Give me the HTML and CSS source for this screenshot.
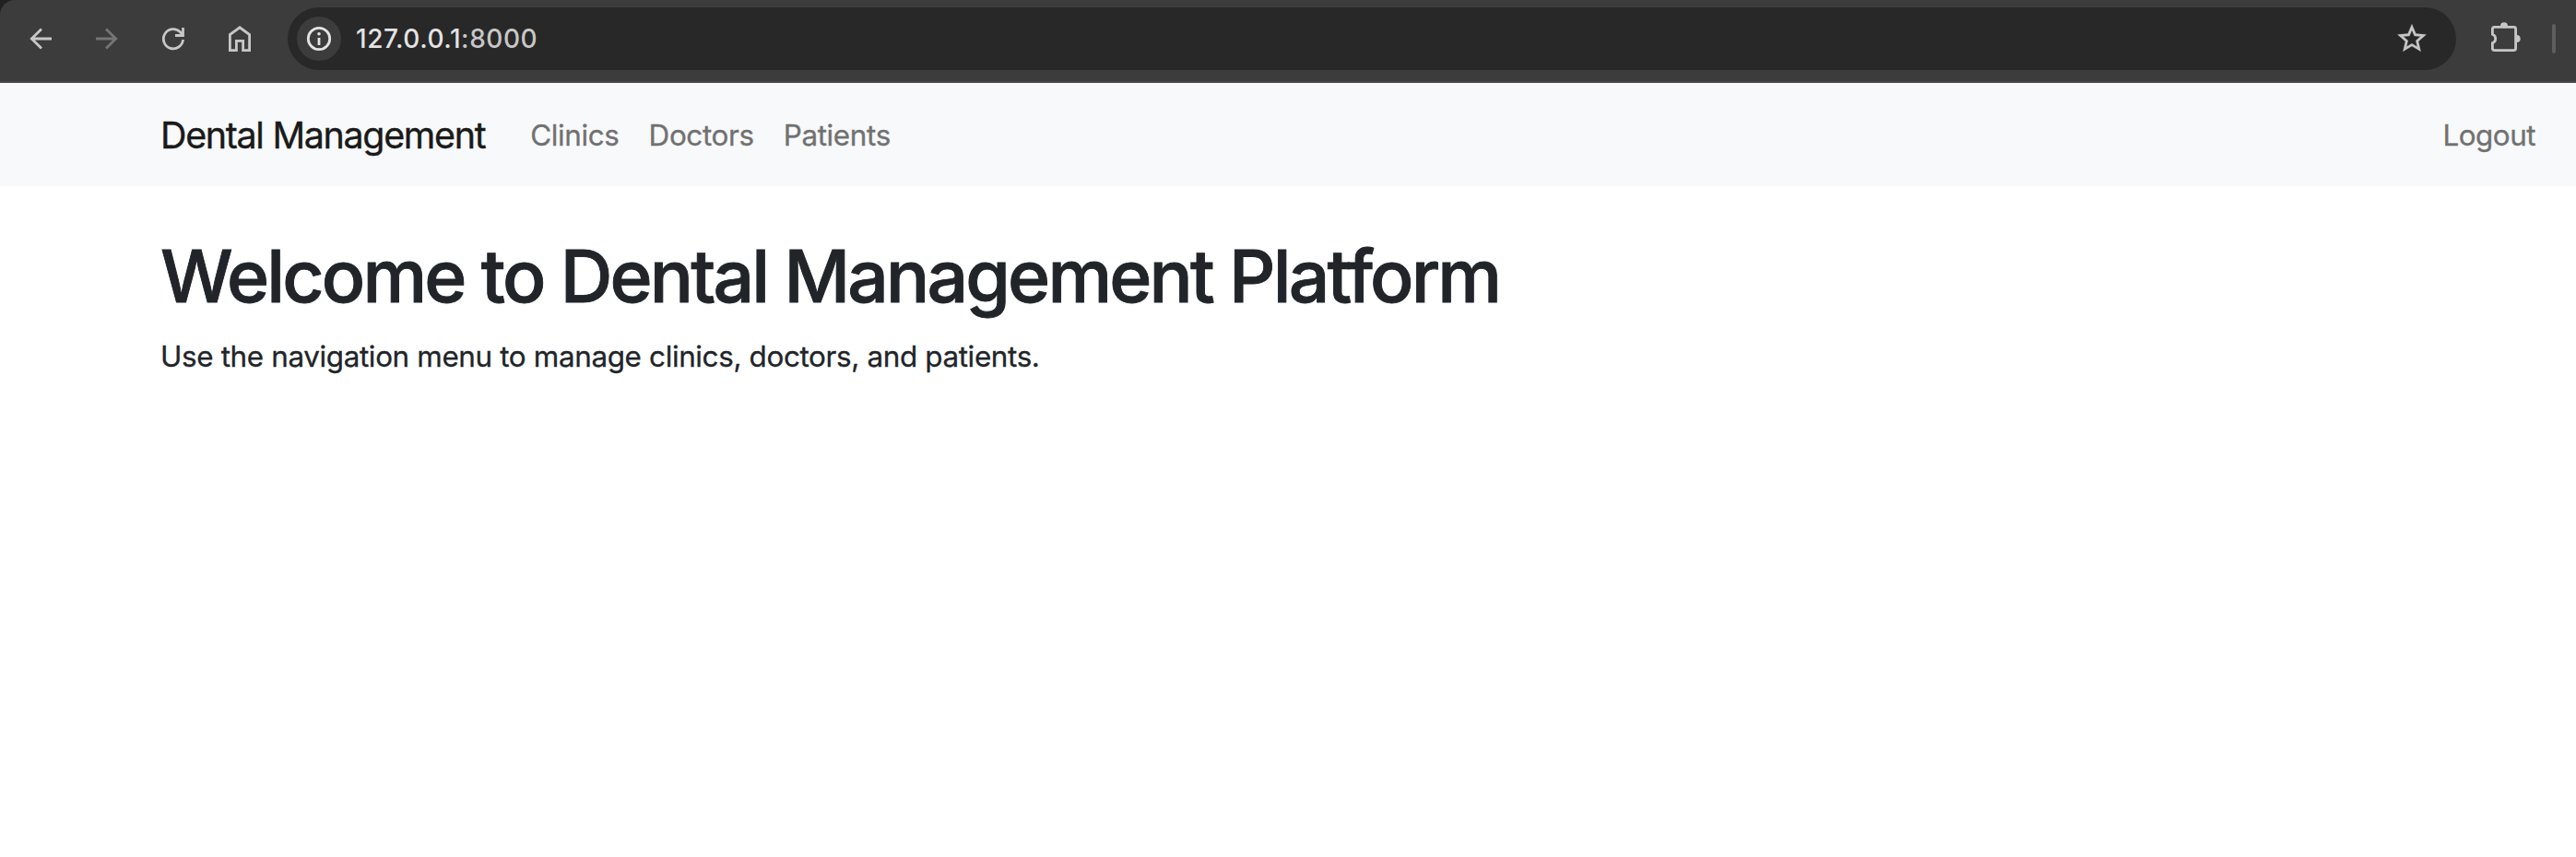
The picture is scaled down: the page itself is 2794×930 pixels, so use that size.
FILE: index.html
```html
<!DOCTYPE html>
<html lang="en">
<head>
<meta charset="utf-8">
<title>Dental Management</title>
<link rel="stylesheet" href="styles.css">
</head>
<body>
<div class="backdrop">
  <header class="toolbar">
    <div class="controls">
      <svg class="icon" viewBox="0 0 32 32"><path d="M28 16H6M17 5.500L6.300 16l10.700 10.500"/></svg>
      <svg class="icon disabled" viewBox="0 0 32 32"><path d="M4 16h22M15 5.500L25.700 16 15 26.500"/></svg>
      <svg class="icon" viewBox="0 0 32 32"><path d="M26.500 17A10.600 10.600 0 1 1 23.500 8.800L26 11.500M18 12.500h8.500V4"/></svg>
      <svg class="icon" viewBox="0 0 32 32"><path d="M5.400 28.600V11.500L16 3.800l10.600 7.700v17.100h-7v-10.200h-7.200v10.200z"/></svg>
    </div>
    <div class="omnibox">
      <span class="site-info">
        <svg class="icon" viewBox="0 0 32 32"><circle cx="16" cy="16" r="11.700"/><path d="M16 15v8"/><circle class="dot" cx="16" cy="10.700" r="1.800"/></svg>
      </span>
      <span class="url"><span class="host">127.0.0.1</span><span class="port">:8000</span></span>
      <svg class="icon star" viewBox="1.7 1.8 20.6 20.6"><path d="M22 9.240l-7.190-.62L12 2 9.190 8.630 2 9.240l5.460 4.730L5.820 21 12 17.270 18.180 21l-1.630-7.030L22 9.240zM12 15.400l-3.760 2.270 1-4.280-3.320-2.880 4.380-.38L12 6.100l1.710 4.040 4.380.38-3.320 2.880 1 4.280L12 15.400z"/></svg>
    </div>
    <svg class="icon puzzle" viewBox="0 0 36 36"><path d="M5.400 5.400h21.200q2 0 2 2v21.200q0 2-2 2H5.400q-2 0-2-2v-5.900a5 5 0 0 0 0-9.400V7.400q0-2 2-2z"/><path class="knob" d="M12 4.500a4 4.200 0 0 1 8 0zM29.500 14a4.200 4 0 0 1 0 8z"/></svg>
    <span class="divider"></span>
  </header>
</div>
<nav class="navbar">
  <a class="brand">Dental Management</a>
  <a class="link clinics">Clinics</a>
  <a class="link doctors">Doctors</a>
  <a class="link patients">Patients</a>
  <a class="link logout">Logout</a>
</nav>
<main class="content">
  <h1 class="title">Welcome to Dental Management Platform</h1>
  <p class="lead">Use the navigation menu to manage clinics, doctors, and patients.</p>
</main>
</body>
</html>
```
FILE: styles.css
```css
* { box-sizing: border-box; }
body {
  margin: 0;
  background: #fff;
  color: #212529;
  font-family: Inter, "Liberation Sans", sans-serif;
  white-space: nowrap;
}
.backdrop { background: #1f2020; }
.toolbar {
  display: flex;
  align-items: center;
  height: 90px;
  padding: 0 22px 4px 28px;
  background: #3c3c3c;
  border-bottom: 2px solid #4a4748;
  border-top-left-radius: 16px;
}
.controls { display: flex; gap: 40px; }
.icon {
  display: block;
  flex: none;
  width: 32px;
  height: 32px;
  fill: none;
  stroke: #c7c7c7;
  stroke-width: 2.8;
}
.icon.disabled { stroke: #757575; }
.omnibox {
  display: flex;
  flex: 1;
  align-items: center;
  height: 68px;
  margin-left: 36px;
  padding: 0 32px 0 10px;
  border-radius: 34px;
  background: #282828;
}
.site-info {
  display: flex;
  align-items: center;
  justify-content: center;
  width: 48px;
  height: 48px;
  border-radius: 50%;
  background: #3c3c3c;
}
.site-info .icon { stroke: #e3e3e3; }
.dot { fill: #e3e3e3; stroke: none; }
.url {
  margin-left: 16px;
  font-size: 28px;
  font-weight: 500;
  line-height: 34px;
  letter-spacing: 0.550px;
}
.host { color: #e3e3e3; }
.port { color: #c7c7c7; }
.icon.star {
  margin-left: auto;
  fill: #c7c7c7;
  stroke-width: 0.2;
}
.puzzle { width: 36px; height: 36px; margin-left: 36px; }
.knob { fill: #c7c7c7; stroke: none; }
.divider {
  width: 4px;
  height: 32px;
  margin-left: 32px;
  border-radius: 2px;
  background: #5e5e5e;
}
.navbar {
  display: flex;
  align-items: center;
  height: 112px;
  padding: 2px 44px 0 174px;
  background: #f8f9fb;
}
.brand {
  color: #1a1a1a;
  font-size: 39.400px;
  line-height: 60px;
  letter-spacing: -1.300px;
  -webkit-text-stroke: 0.400px;
}
.link {
  color: #717171;
  font-size: 31.400px;
  line-height: 48px;
  letter-spacing: -0.350px;
  -webkit-text-stroke: 0.300px;
}
.clinics { margin-left: 49px; }
.doctors, .patients { margin-left: 32px; }
.logout { margin-left: auto; letter-spacing: -0.500px; }
.content { padding: 50px 174px 0; }
.title {
  margin: 0;
  font-size: 78.500px;
  font-weight: 500;
  line-height: 96px;
  letter-spacing: -2.800px;
  -webkit-text-stroke: 0.900px;
}
.lead {
  margin: 15px 0 0;
  font-size: 31.400px;
  line-height: 48px;
  letter-spacing: -0.350px;
  -webkit-text-stroke: 0.300px;
}
```
